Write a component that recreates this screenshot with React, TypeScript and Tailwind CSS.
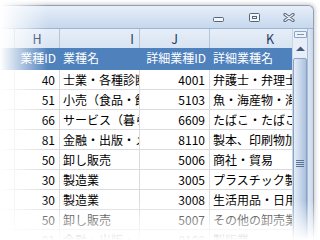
import React from "react";

const rows = [
  ["40", "士業・各種診断", "4001", "弁護士・弁理士"],
  ["51", "小売（食品・飲料）", "5103", "魚・海産物・海藻"],
  ["66", "サービス（暮らし）", "6609", "たばこ・たばこ用品"],
  ["81", "金融・出版・メディア", "8110", "製本、印刷物加工"],
  ["50", "卸し販売", "5006", "商社・貿易"],
  ["30", "製造業", "3005", "プラスチック製品"],
  ["30", "製造業", "3008", "生活用品・日用品"],
  ["50", "卸し販売", "5007", "その他の卸売業"],
  ["81", "金融・出版・メディア", "8108", "製版業"],
];

function TitleButtons() {
  return (
    <div className="flex justify-end items-start pr-[18px] h-full">
      <svg width="12" height="6" className="mt-[11px]">
        <rect x="0.5" y="0.5" width="10" height="4" rx="1" fill="#f2f5f9" stroke="#56657a" />
      </svg>
      <svg width="11" height="9" className="mt-[7px] ml-[24px]">
        <rect x="0.5" y="0.5" width="10" height="8" rx="1" fill="#f2f5f9" stroke="#56657a" />
        <rect x="3.5" y="3.5" width="4" height="2" fill="none" stroke="#56657a" />
      </svg>
      <svg width="12" height="9" className="mt-[7px] ml-[23px]">
        <path d="M2 1.5 L10 7.5 M10 1.5 L2 7.5" stroke="#56657a" strokeWidth="3.2" strokeLinecap="round" />
        <path d="M2 1.5 L10 7.5 M10 1.5 L2 7.5" stroke="#f4f6fa" strokeWidth="1.2" strokeLinecap="round" />
      </svg>
    </div>
  );
}

function Scrollbar() {
  return (
    <div className="w-[15px] flex flex-col items-center bg-[#e8eef7] border-l border-[#c9d6e6]">
      <div className="mt-[2px] w-[13px] h-[7px] rounded-[1px] border border-[#8ea6c6] bg-[#eef3f9] flex items-center justify-center">
        <div className="w-[7px] h-[1px] bg-[#7d93b3]" />
      </div>
      <svg width="11" height="6" className="mt-[8px]">
        <path d="M1 5 L5.5 0.5 L10 5 Z" fill="#46597a" />
      </svg>
      <div className="mt-[6px] w-[14px] h-[210px] rounded-[2px] border border-[#8aa3c6] bg-linear-to-r from-[#e4ecf6] via-[#c8d8ec] to-[#a9c0dd] flex flex-col items-center justify-center gap-[1px]">
        <div className="w-[8px] h-[1px] bg-[#5d7496]" />
        <div className="w-[8px] h-[1px] bg-[#5d7496]" />
        <div className="w-[8px] h-[1px] bg-[#5d7496]" />
        <div className="w-[8px] h-[1px] bg-[#5d7496]" />
      </div>
    </div>
  );
}

export default function App() {
  const cell = "h-[20px] leading-[19px] border-b border-r border-[#d9dbde] whitespace-nowrap overflow-hidden text-[12px]";
  return (
    <div className="w-[320px] h-[240px] relative overflow-hidden bg-white pt-[5px] font-['Noto_Sans_CJK_JP','Noto_Sans',sans-serif] text-black">
      <div className="w-[314px] border-t border-r border-[#8e9fb6] rounded-tr-[6px] bg-[#d6e2f1] shadow-[1px_-1px_4px_rgba(0,0,0,0.22)]">
        <div className="h-[23px] border-b border-[#9db3cf] rounded-tr-[5px] bg-linear-to-b from-[#e6eef9] to-[#c7d8ee]">
          <TitleButtons />
        </div>
        <div className="flex">
          <div className="w-[292px] flex flex-col bg-white">
            <div className="flex h-[19px] bg-linear-to-b from-[#e6eef8] to-[#d8e4f2] text-[12.5px] leading-[19px] text-[#233a5e]">
              <div className="w-[15px] border-r border-[#b4c5dc]" />
              <div className="w-[45px] border-r border-[#b4c5dc] text-center">H</div>
              <div className="w-[80px] border-r border-[#b4c5dc] text-right pr-[5px]">I</div>
              <div className="w-[70px] border-r border-[#b4c5dc] text-center">J</div>
              <div className="w-[82px] pl-[56px]">K</div>
            </div>
            <div className="flex h-[22px] bg-[#4f81bd] text-white text-[12px] leading-[20px] whitespace-nowrap">
              <div className="w-[15px]" />
              <div className="w-[45px] text-right pr-[4px] overflow-hidden">業種ID</div>
              <div className="w-[80px] pl-[3px] overflow-hidden">業種名</div>
              <div className="w-[70px] text-right pr-[4px] overflow-hidden">詳細業種ID</div>
              <div className="w-[82px] pl-[3px] overflow-hidden">詳細業種名</div>
            </div>
            {rows.map((r, i) => (
              <div key={i} className="flex">
                <div className={`w-[15px] ${cell}`} />
                <div className={`w-[45px] text-right pr-[4px] ${cell}`}>{r[0]}</div>
                <div className={`w-[80px] pl-[3px] ${cell}`}>{r[1]}</div>
                <div className={`w-[70px] text-right pr-[4px] ${cell}`}>{r[2]}</div>
                <div className={`w-[82px] pl-[3px] border-r-0 ${cell}`}>{r[3]}</div>
              </div>
            ))}
          </div>
          <Scrollbar />
          <div className="w-[6px] bg-linear-to-r from-[#dfe8f4] to-[#c9d7ea] border-l border-[#a9bcd5]" />
        </div>
      </div>
      <div className="absolute left-0 top-0 w-[48px] h-full bg-linear-to-r from-white via-white/50 to-white/0" />
      <div className="absolute left-0 top-[200px] w-full h-[40px] bg-linear-to-b from-white/0 to-white" />
    </div>
  );
}
